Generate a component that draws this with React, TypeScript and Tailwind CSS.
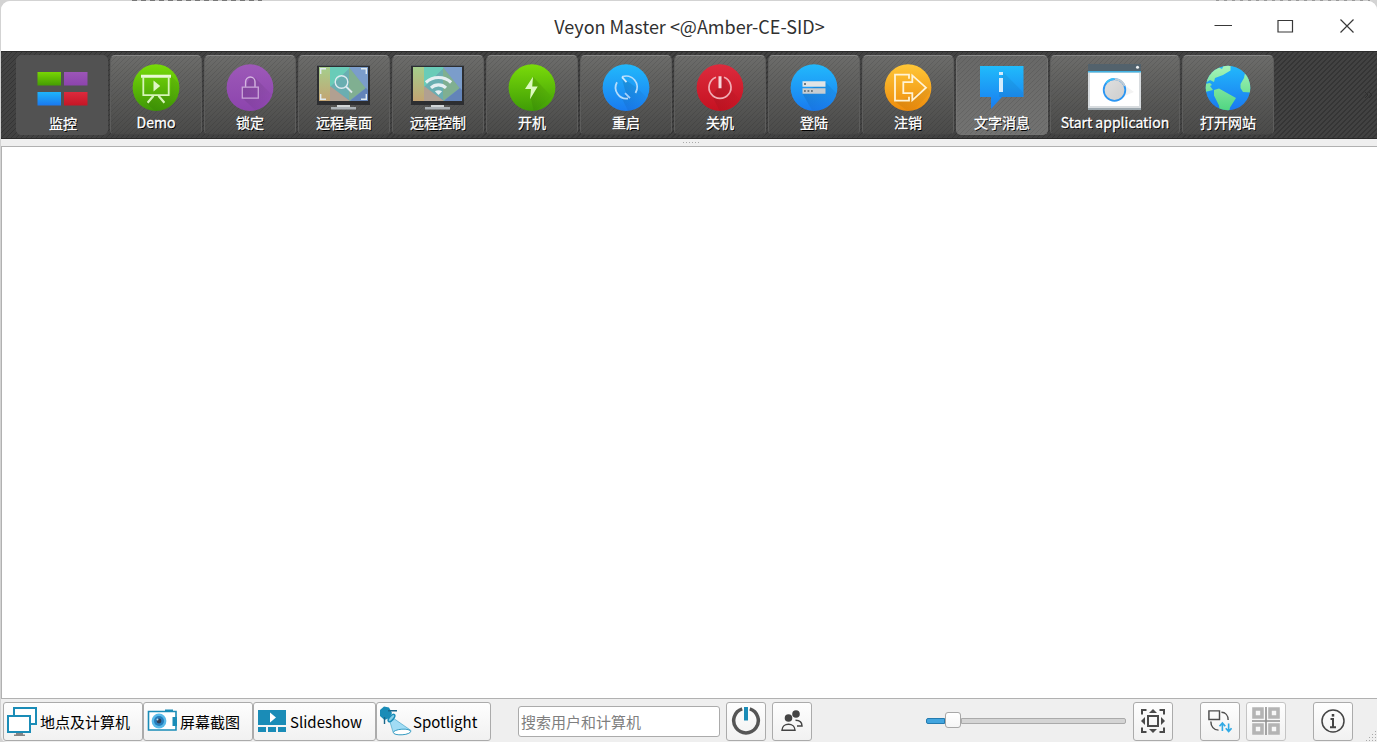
import React from "react";

const stripes =
  "bg-[repeating-linear-gradient(135deg,rgba(0,0,0,0.2)_0px,rgba(0,0,0,0.2)_1px,transparent_1px,transparent_3.54px)]";

type Kind = "flat" | "raised" | "hover";

function ToolButton({ label, kind = "raised", wide = false, children }: { label: string; kind?: Kind; wide?: boolean; children: React.ReactNode }) {
  const skin =
    kind === "flat"
      ? "bg-[#525252] border-[#525252]"
      : kind === "hover"
        ? "bg-linear-to-b from-[#686867] to-[#727271] border-[#737372] border-t-[#8b8b8a]"
        : "bg-linear-to-b from-[#6c6c6a] to-[#4a4a49] border-[#5d5d5c] border-t-[#858584] border-b-[#434343]";
  return (
    <div className={`relative h-20 shrink-0 overflow-hidden rounded-[5px] border ${wide ? "w-[130px]" : "w-[92px]"} ${skin}`}>
      {kind !== "flat" && <div className={`absolute inset-0 opacity-50 ${stripes}`} />}
      <div className={`relative flex h-full flex-col items-center ${kind === "flat" ? "pl-[2px]" : ""}`}>
        <div className="mt-[7px] flex h-[49px] w-[54px] items-center justify-center">{children}</div>
        <span className={`whitespace-nowrap text-[14px] leading-[20px] text-white [-webkit-text-stroke:0.3px_#fff] [text-shadow:1px_1px_0_#000] ${kind === "flat" ? "mt-px" : ""}`}>
          {label}
        </span>
      </div>
    </div>
  );
}

function Gradient({ id, from, to }: { id: string; from: string; to: string }) {
  return (
    <linearGradient id={id} x1="0" y1="0" x2="0" y2="1">
      <stop offset="0" stopColor={from} />
      <stop offset="1" stopColor={to} />
    </linearGradient>
  );
}

function Disc({ id, from, to, shadow, children }: { id: string; from: string; to: string; shadow?: string; children: React.ReactNode }) {
  return (
    <svg className="mr-px h-12 w-12 shrink-0" viewBox="0 0 48 48" fill="none">
      <defs>
        <Gradient id={id} from={from} to={to} />
        <linearGradient id={`${id}-fade`} x1="0" y1="0" x2="1" y2="1">
          <stop offset=".2" stopColor="#000" stopOpacity=".11" />
          <stop offset=".85" stopColor="#000" stopOpacity="0" />
        </linearGradient>
        <clipPath id={`${id}-clip`}><circle cx="24" cy="24" r="23.4" /></clipPath>
      </defs>
      <g transform="translate(0 -0.3)">
        <circle cx="24" cy="24" r="23.4" fill={`url(#${id})`} />
        {shadow && <path d={shadow} fill={`url(#${id}-fade)`} clipPath={`url(#${id}-clip)`} />}
        {children}
      </g>
    </svg>
  );
}

function Monitor({ id, children }: { id: string; children: React.ReactNode }) {
  return (
    <svg className="-mt-px h-[46px] w-[54px]" viewBox="0 0 54 46" fill="none">
      <defs>
        <clipPath id={id}><rect x="2" y="3" width="49" height="34" /></clipPath>
        <linearGradient id={`${id}-g`} x1="0" x2="0" y1="0" y2="1">
          <stop offset="0" stopColor="#a5cf8c" /><stop offset="1" stopColor="#c4a473" />
        </linearGradient>
      </defs>
      <path d="M0 1h53v40H0z" fill="#2d2e31" />
      <path d="M0 1h53v1H0z" fill="#53575b" />
      <g clipPath={`url(#${id})`}>
        <path d="M2 3h49v34H2z" fill="#6e96be" />
        <path d="M2 3h12v34H2z" fill={`url(#${id}-g)`} />
        <path d="M13 3h21L13 24z" fill="#69ccb8" />
        <path d="M13 23 34 3v34z" fill="#6aaeb1" />
        <path d="M13 22v15h20z" fill="#b1a091" />
        <path d="m32 3 17 21-17 13z" fill="#80af91" />
        <path d="M32 3h19v24z" fill="#7b9dcb" />
        <path d="m33 37 16-13 2 2v11z" fill="#6384b9" />
      </g>
      <path d="M20 41h13v3H20z" fill="#d1d5d7" />
      <path d="M14 43h25v2.500H14z" fill="#aab0b5" />
      {children}
    </svg>
  );
}

function MonitoringIcon() {
  return (
    <svg className="mt-[2px] h-[36px] w-[52px]" viewBox="0 0 52 36">
      <defs>
        <Gradient id="tile-g" from="#78d505" to="#459d03" />
        <Gradient id="tile-p" from="#9c56b7" to="#8c44ad" />
        <Gradient id="tile-b" from="#1eb4fb" to="#1a78ef" />
        <Gradient id="tile-r" from="#dc2a3d" to="#c51625" />
      </defs>
      <path d="M.5 1H24v13.500H.5z" fill="url(#tile-g)" />
      <path d="M27 1h23.500v13.500H27z" fill="url(#tile-p)" />
      <path d="M.5 21H24v13.500H.5z" fill="url(#tile-b)" />
      <path d="M27 21h23.500v13.500H27z" fill="url(#tile-r)" />
    </svg>
  );
}

function DemoIcon() {
  return (
    <Disc id="demo" from="#78dc08" to="#3e9606" shadow="M39 12 50 23v27H26L14 39l9-7h16z">
      <path d="M9 12.5h30" stroke="#e9f9d3" strokeWidth="3" />
      <path d="M11.3 13v18.5h25.4V13" stroke="#d6f4b7" strokeWidth="1.8" />
      <path d="m21.5 16.7 6.7 5.5-6.7 5.5z" fill="#dff6c5" />
      <path d="m21.5 32-5.9 7M26.5 32l5.9 7" stroke="#d6f4b7" strokeWidth="2.2" />
    </Disc>
  );
}

function LockIcon() {
  return (
    <Disc id="lock" from="#9d59b8" to="#8c44ad" shadow="m29 14 17 17-14 18-16-15V23h3l5-9z">
      <path d="M16.3 23.4h16v11h-16z" stroke="#caa6d9" strokeWidth="1.3" />
      <path d="M19.6 23v-5a4.7 4.7 0 0 1 9.4 0v5" stroke="#d5b6e0" strokeWidth="1.4" />
    </Disc>
  );
}

function RemoteViewIcon() {
  return (
    <Monitor id="view">
      <g stroke="#dfeaf0" strokeWidth="1.4">
        <path d="M3.7 10V4.7H9M44 4.7h5.3V10M3.7 30v5.3H9M44 35.3h5.3V30" />
        <circle cx="24.5" cy="18" r="6.3" /><path d="m29 22.5 6 6" strokeWidth="1.8" />
      </g>
    </Monitor>
  );
}

function RemoteControlIcon() {
  return (
    <Monitor id="control">
      <g stroke="#e5eff2" strokeWidth="3.1">
        <path d="M14.9 18.5a18.4 18.4 0 0 1 25.2 0" />
        <path d="M20 23.8a11 11 0 0 1 15 0" />
      </g>
      <path d="M23.9 27.2q3.6-2 7.2 0l-3.6 3.8z" fill="#e5eff2" />
    </Monitor>
  );
}

function BoltIcon() {
  return (
    <Disc id="bolt" from="#7adb0a" to="#3f9c06" shadow="m25 13 19 20-18 16-3-14z">
      <path d="m25 13-8 12.4h6L22 35.5l7.7-12.8h-5.5z" fill="#dcf9c0" />
    </Disc>
  );
}

function RestartIcon() {
  return (
    <Disc id="restart" from="#22b9fc" to="#197bf0" shadow="m20 14 15 10 12 12-20 13-7-14 4-5-3-11z">
      <path d="M15 18.500a11 11 0 0 0 11 16.300" stroke="#b4dcfb" strokeWidth="1.8" />
      <path d="M20 13.200a11 11 0 0 1 13.500 16" stroke="#b4dcfb" strokeWidth="1.8" />
      <path d="m24.500 18.500-4.500-5" stroke="#cce9fd" strokeWidth="1.8" />
      <path d="m23 29.500 5 5" stroke="#a6d0fb" strokeWidth="1.8" />
    </Disc>
  );
}

function ShutdownIcon() {
  return (
    <Disc id="power" from="#dd2b3d" to="#c51221" shadow="m26 12 9 14 10 11-20 13-9-18 6-8z">
      <path d="M20 13.5a11 11 0 1 0 8 0" stroke="#f1adb5" strokeWidth="1.7" />
      <path d="M24 12.6v12" stroke="#f6d5d9" strokeWidth="3" />
    </Disc>
  );
}

function LoginIcon() {
  return (
    <Disc id="login" from="#22b9fc" to="#197bf0" shadow="m35 18 15 15-14 17H24L12 29z">
      <path d="M12.5 17.5h23V23h-23z" fill="#e1e4e5" />
      <path d="M12.5 24.5h23V30h-23z" fill="#c7cdd1" />
      <path d="M14 19.3h2v2h-2zM14 26.2h1.8v2H14zm3.5 0h1.8v2h-1.8zm3.5 0h1.8v2H21z" fill="#6e7a82" />
    </Disc>
  );
}

function LogoutIcon() {
  return (
    <Disc id="logout" from="#ffc737" to="#ee8b0b" shadow="m43 24 4 4-20 22-17-13 16-3z">
      <g stroke="#fff3d5" strokeWidth="1.8">
        <path d="M25 15v-4H11v26h14v-4" />
        <path d="M19.3 18.5h9v-6.8L42 24 28.3 36.6v-7.2h-9z" />
      </g>
    </Disc>
  );
}

function MessageIcon() {
  return (
    <svg className="mt-px h-[45px] w-[44px]" viewBox="0 0 44 45">
      <defs><Gradient id="message" from="#20bbfb" to="#197cf0" /></defs>
      <path d="M0 0h43.5v31H22L11 43V31H0z" fill="url(#message)" />
      <path d="m23 6 20 20v5H19v-5z" opacity=".05" />
      <path d="M19 6h4v3h-4zm0 6h4v14h-4z" fill="#d5ecfc" />
    </svg>
  );
}

function ApplicationIcon() {
  return (
    <svg className="-mt-px h-12 w-[54px]" viewBox="0 0 54 48" fill="none">
      <defs><linearGradient id="window-ball" x1="0" y1="0" x2="1" y2="1"><stop stopColor="#e0e0e0" /><stop offset="1" stopColor="#cdcdcd" /></linearGradient></defs>
      <path d="M0 1h53v7H0z" fill="#53626c" />
      <path d="M0 8h53v39H0z" fill="#d8dcdf" />
      <path d="M0 8h53v1.4H0z" fill="#43b3e3" />
      <path d="M2 10h49v33H2z" fill="#fff" />
      <path d="M0 45h53v2H0z" fill="#9ca7ae" />
      <circle cx="49.5" cy="4.3" r="1.5" fill="#f2f4f5" />
      <path d="m35 21 11 8-12 5z" fill="#f3f3f3" />
      <circle cx="26.5" cy="27" r="10.8" fill="url(#window-ball)" stroke="#2b96f3" strokeWidth="1.8" />
      <path d="M18 20a11 11 0 0 1 8-4" stroke="#3bc1fa" strokeWidth="1.8" />
      <path d="M26.7 16.2A10.8 10.8 0 0 1 36.7 23" stroke="#c4cdd4" strokeWidth="2" />
    </svg>
  );
}

function GlobeIcon() {
  return (
    <svg className="mr-px h-[46px] w-[46px]" viewBox="0 0 46 46">
      <defs>
        <Gradient id="sea" from="#22b9fc" to="#1a78ef" />
        <linearGradient id="land" x1="0" y1="0" x2="0" y2="46" gradientUnits="userSpaceOnUse">
          <stop stopColor="#a9f5bb" /><stop offset="1" stopColor="#4fd580" />
        </linearGradient>
        <clipPath id="world"><circle cx="23" cy="23" r="22.3" /></clipPath>
      </defs>
      <circle cx="23" cy="23" r="22.3" fill="url(#sea)" />
      <g clipPath="url(#world)" fill="url(#land)">
        <path d="M0 16 5 6l8-4 4 2 2-4h6.5v5.5L18 10l-8 3-1 4-4-2-3 2z" />
        <path d="m0 19 5-1 2 2-2 1 3 4-8 2z" />
        <path d="m9 25 5-1.500 17 9.500-6 9.500-1 5h-9l-1-7-5-10z" />
        <path d="m40 8-1 5-3.500 6v4l2.500 4 9 .5V14z" />
      </g>
    </svg>
  );
}

const panelButton =
  "flex h-[39px] shrink-0 items-center rounded-[3px] border border-[#ababab] bg-linear-to-b from-[#fefefe] to-[#f1f1f1]";

function PanelButton({ label, size, children }: { label: string; size: string; children: React.ReactNode }) {
  return (
    <button className={`${panelButton} ${size} whitespace-nowrap pl-[3px] text-left text-[15px] leading-5 text-black`}>
      {children}
      <span className="ml-[3px]">{label}</span>
    </button>
  );
}

function IconButton({ className = "", children }: { className?: string; children: React.ReactNode }) {
  return <button className={`${panelButton} w-10 justify-center ${className}`}>{children}</button>;
}

function ComputersIcon() {
  return (
    <svg className="-mt-[2px] h-[30px] w-[30px]" viewBox="1 0 30 30" fill="none">
      <path d="M8 2h22v16H8z" fill="#fff" stroke="#1a8cb7" strokeWidth="2" />
      <path d="M2 10h22v16H2z" fill="#fff" stroke="#1a8cb7" strokeWidth="2" />
      <path d="M10 27h7v1.400h2V30H8v-1.600h2z" fill="#848484" />
    </svg>
  );
}

function CameraIcon() {
  return (
    <svg className="-mt-[2px] h-[30px] w-[30px]" viewBox="0 0 30 30" fill="none">
      <path d="M1.500 5.500H29V24H1.500z" fill="#fff" stroke="#1a8cb7" strokeWidth="1.6" />
      <path d="M18 3.500h8V6h-8zM25.500 11H30v9h-4.500z" fill="#1a8cb7" />
      <circle cx="12" cy="15" r="7.4" fill="#58b9e8" /><circle cx="12" cy="15" r="5" fill="#267dbb" />
      <circle cx="12" cy="15" r="2.4" fill="#303c54" /><circle cx="10.5" cy="13.500" r="1" fill="#b4dcf2" />
    </svg>
  );
}

function SlideshowIcon() {
  return (
    <svg className="-mt-[2px] h-[30px] w-[30px]" viewBox="0 0 30 30">
      <path d="M1 4h28v15H1zM1 21h8v5H1zm10 0h8v5h-8zm10 0h8v5h-8z" fill="#1a8cb7" />
      <path d="m13 6.5 6 5-6 5z" fill="#fff" />
    </svg>
  );
}

function SpotlightIcon() {
  return (
    <svg className="h-[30px] w-[30px] overflow-visible" viewBox="0 0 30 30" fill="none">
      <path d="M14.500 12 31 23.500c0 4-15 6-18 1.500l-3-10z" fill="#a1dcf4" stroke="#1a8cb7" strokeWidth=".5" />
      <ellipse cx="22" cy="25" rx="8.7" ry="2.8" fill="#fff" stroke="#1a8cb7" strokeWidth=".8" transform="rotate(-4 22 25)" />
      <path d="m0 3 4-3.500 5 1 3 5.500-2.500 5-5 2-4.500-4z" fill="#1a8cb7" />
      <path d="M8 3.700h9M4.500 10v7" stroke="#1a6689" strokeWidth="1.4" />
      <ellipse cx="11.500" cy="11" rx="4.500" ry="2" transform="rotate(-50 11.5 11)" fill="#86cfe9" stroke="#1a8cb7" strokeWidth="1.5" />
    </svg>
  );
}

export default function App() {
  return (
    <div className="flex h-[742px] w-[1377px] flex-col overflow-hidden bg-[#d3d3d3] font-['Noto_Sans_CJK_SC','Noto_Sans',sans-serif]">
      <div className="flex h-px shrink-0">
        <div className="w-[132px]" />
        <div className="w-[130px] bg-[repeating-linear-gradient(90deg,#777_0px,#777_5px,#ccc_5px,#ccc_9px)]" />
        <div className="w-[954px]" />
        <div className="w-[154px] bg-[repeating-linear-gradient(90deg,#999_0px,#999_3px,#ccc_3px,#ccc_8px)]" />
      </div>
      <div className="ml-px flex h-[741px] flex-col overflow-hidden rounded-t-[9px] rounded-bl-[6px] bg-[#efefef]">
        <header className="flex h-[50px] shrink-0 items-center bg-white">
          <div className="w-[191px]" />
          <h1 className="flex-1 pl-px text-center text-[18px] leading-7 text-[#303030]">Veyon Master &lt;@Amber-CE-SID&gt;</h1>
          <svg className="h-[30px] w-[191px]" viewBox="0 0 191 30" fill="none" stroke="#383838" strokeWidth="1.2">
            <path d="M28.5 14.5h17.5" />
            <path d="M92 9.500h14.500V21H92z" />
            <path d="m154.500 8.500 13 13m0-13-13 13" />
          </svg>
        </header>

        <nav className={`flex h-[88px] shrink-0 gap-[2px] border-y border-[#2b2b2b] bg-[#424242] pt-[3px] pl-[15px] ${stripes}`}>
          <ToolButton label="监控" kind="flat"><MonitoringIcon /></ToolButton>
          <ToolButton label="Demo"><DemoIcon /></ToolButton>
          <ToolButton label="锁定"><LockIcon /></ToolButton>
          <ToolButton label="远程桌面"><RemoteViewIcon /></ToolButton>
          <ToolButton label="远程控制"><RemoteControlIcon /></ToolButton>
          <ToolButton label="开机"><BoltIcon /></ToolButton>
          <ToolButton label="重启"><RestartIcon /></ToolButton>
          <ToolButton label="关机"><ShutdownIcon /></ToolButton>
          <ToolButton label="登陆"><LoginIcon /></ToolButton>
          <ToolButton label="注销"><LogoutIcon /></ToolButton>
          <ToolButton label="文字消息" kind="hover"><MessageIcon /></ToolButton>
          <ToolButton label="Start application" wide><ApplicationIcon /></ToolButton>
          <ToolButton label="打开网站"><GlobeIcon /></ToolButton>
          <svg className="mt-9 mr-[3px] ml-auto h-2 w-[10px]" viewBox="0 0 10 8" fill="none" stroke="#303030" strokeWidth="1">
            <path d="m1 1 3 3-3 3m4-6 3 3-3 3" />
          </svg>
        </nav>

        <div className="flex h-[7px] shrink-0 items-center justify-center pl-[5px]">
          <svg className="h-px w-[17px]" viewBox="0 0 17 1"><path d="M0 .5h17" stroke="#aaa" strokeDasharray="1 2" /></svg>
        </div>
        <main className="h-[553px] shrink-0 border border-r-0 border-[#b1b1b1] bg-white" />

        <footer className="flex h-[43px] shrink-0 pt-[3px] pl-[2px]">
          <PanelButton label="地点及计算机" size="w-[140px]"><ComputersIcon /></PanelButton>
          <PanelButton label="屏幕截图" size="w-[110px]"><CameraIcon /></PanelButton>
          <PanelButton label="Slideshow" size="w-[123px]"><SlideshowIcon /></PanelButton>
          <PanelButton label="Spotlight" size="w-[115px]"><SpotlightIcon /></PanelButton>
          <input
            className="mt-1 ml-[27px] h-[31px] w-[202px] shrink-0 rounded-[3px] border border-[#ababab] bg-white px-[2px] text-[15px] leading-5 placeholder:text-[#7f7f7f]"
            placeholder="搜索用户和计算机"
          />
          <IconButton className="ml-[6px]">
            <svg className="-mt-px h-[30px] w-[30px]" viewBox="0 0 30 30" fill="none">
              <path d="M11.2 2.9a12.3 12.3 0 1 0 7.6 0" stroke="#555" strokeWidth="3.5" />
              <path d="M15 1v13.5" stroke="#1a8cb7" strokeWidth="4" />
            </svg>
          </IconButton>
          <IconButton className="ml-[6px]">
            <svg className="-mt-px h-[24px] w-[24px]" viewBox="0 0 24 24" fill="none" stroke="#444" strokeWidth="1.5">
              <circle cx="8.5" cy="9" r="3.8" fill="#444" stroke="none" />
              <circle cx="16" cy="5" r="3.8" fill="#444" stroke="none" />
              <path d="M2 21.3c0-8 13-8 13 0zM15.5 11.2c4 0 6.5 2 6.5 5.8h-5" />
            </svg>
          </IconButton>
          <div className="mt-[10px] ml-[114px] flex h-4 w-[200px] items-center">
            <div className="mt-[2px] h-[6px] w-[19px] rounded-l-[2px] border border-[#247baf] bg-[#42a5df]" />
            <div className="h-4 w-4 shrink-0 rounded-[3px] border border-[#a7a7a7] bg-linear-to-b from-white to-[#f5f5f5]" />
            <div className="mt-[2px] h-[6px] flex-1 rounded-r-[2px] border border-[#aaa] bg-[#d4d4d4]" />
          </div>
          <IconButton className="ml-[7px]">
            <svg className="-mt-px h-[26px] w-[26px]" viewBox="0 0 26 26" fill="none">
              <path d="M2 6.500V2h4.500M19.500 2H24v4.500M2 19.500V24h4.500M19.500 24H24v-4.500M8 8h10v10H8z" stroke="#4a4a4a" strokeWidth="2" />
              <path d="M9 5h8l-4-4zM9 21h8l-4 4zM5 9v8l-4-4zM21 9v8l4-4z" fill="#4a4a4a" />
            </svg>
          </IconButton>
          <IconButton className="ml-[27px]">
            <svg className="-mt-[2px] mr-px h-[25px] w-[25px]" viewBox="0 0 26 26" fill="none" stroke="#4d4d4d" strokeWidth="1.5">
              <path d="M2 3h11v9H2zM15 4.5c4 0 7 3 7 8M4 14c0 5 3 9 8 9" />
              <path d="M16 24v-8m-3 3 3-3.5 3 3.5M22.5 16v8m-3-3 3 3.5 3-3.5" stroke="#31aae5" strokeWidth="1.7" />
            </svg>
          </IconButton>
          <IconButton className="ml-[6px] border-[#c4c4c4]">
            <svg className="-mt-px h-7 w-7" viewBox="0 0 28 28" fill="none">
              <path d="M2 2h8v8H2zM18 2h8v8h-8zM2 18h8v8H2zM18 18h8v8h-8z" stroke="#b4b4b4" strokeWidth="3.6" fill="#f7f7f7" />
              <path d="M14 0v28M0 14h28" stroke="#909090" strokeWidth="1.6" />
            </svg>
          </IconButton>
          <IconButton className="ml-[27px]">
            <svg className="-mt-px h-6 w-6" viewBox="0 0 24 24" fill="none" stroke="#444">
              <circle cx="12" cy="12" r="11" strokeWidth="1.5" />
              <path d="M12 5v2.6" strokeWidth="2.5" />
              <path d="M9.5 10H12v8M9 18.3h6" strokeWidth="2" />
            </svg>
          </IconButton>
          <svg className="mt-auto mr-0 ml-auto h-3 w-3" viewBox="0 0 12 12" fill="#a9a9a9">
            <path d="M10 1h1v1h-1zM7 4h1v1H7zm3 0h1v1h-1zM4 7h1v1H4zm3 0h1v1H7zm3 0h1v1h-1zM1 10h1v1H1zm3 0h1v1H4zm3 0h1v1H7zm3 0h1v1h-1z" />
          </svg>
        </footer>
      </div>
    </div>
  );
}
